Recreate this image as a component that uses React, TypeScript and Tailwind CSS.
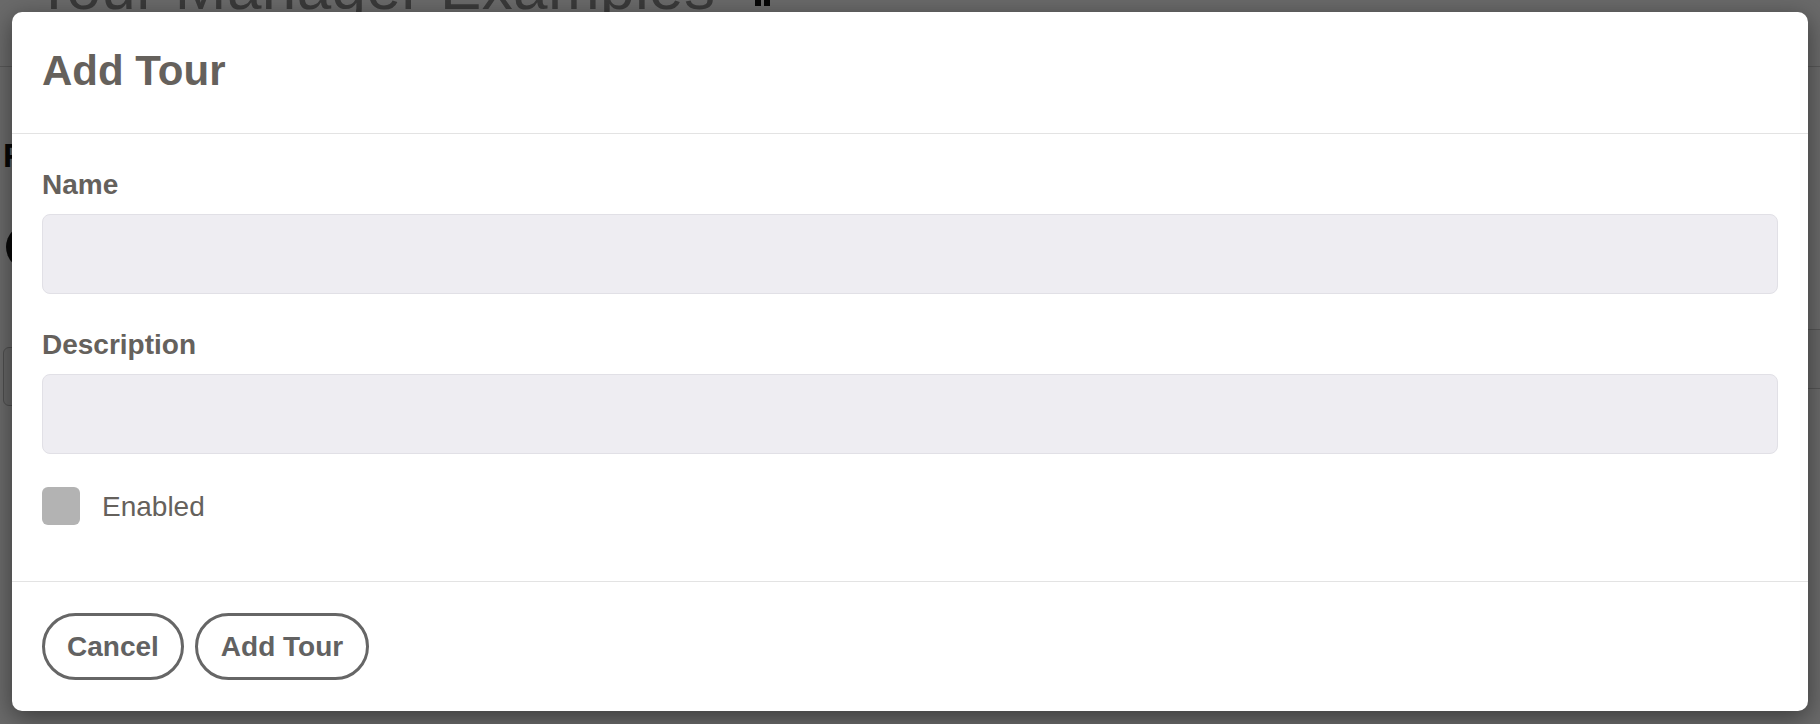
const font = "font-['Liberation_Sans','Helvetica_Neue',Arial,sans-serif]";

function BackgroundPage() {
  return (
    <div className="flex h-full flex-col bg-white text-[#111]">
      {/* page header, mostly hidden behind the dialog */}
      <div className="flex h-[67px] items-start border-b border-[#d4d4d4] pl-[35px]">
        <h1 className="mt-[-43px] text-[62px] font-normal leading-none tracking-[0.4px] text-[#8c8c8c]">Tour Manager Examples</h1>
        <span className="ml-[40px] mt-0 flex h-[6px] gap-[3px]">
          <span className="w-[6px] bg-[#111]" />
          <span className="w-[6px] bg-[#111]" />
        </span>
      </div>

      <div className="flex flex-1">
        <div className="flex w-[60px] flex-col pl-[3px]">
          <p className="mt-[72px] text-[33px] font-bold leading-none">F</p>
          <div className="ml-[3px] mt-[52px] h-[46px] w-[46px] rounded-full bg-[#1a1a1a]" />
          <div className="mt-[77px] h-[59px] w-[40px] rounded-[6px] border border-[#bbb] bg-[#f2f2f2]" />
        </div>
        <div className="flex-1" />
        <div className="flex w-[60px] flex-col">
          <p className="mt-[154px] pl-[2px] text-[26px] leading-none text-[#222]">Di</p>
          <div className="mt-[82px] h-[60px] border-y border-[#ccc] bg-[#f7f7f7]" />
          <p className="mt-[56px] pl-[2px] text-[24px] font-bold leading-none">b</p>
        </div>
      </div>
    </div>
  );
}

function Field({ label }: { label: string }) {
  return (
    <div className="flex flex-col">
      <label className="text-[28px] font-bold leading-[32px] text-[#65615c]">{label}</label>
      <input
        type="text"
        className="mt-[13px] h-[80px] w-full rounded-[8px] border border-[#e1e0e6] bg-[#eeedf2] px-4 text-[27px] outline-none"
      />
    </div>
  );
}

export default function App() {
  return (
    <div className={`relative h-[724px] w-full overflow-hidden ${font}`}>
      <BackgroundPage />

      {/* overlay */}
      <div className="absolute inset-0 bg-[rgba(0,0,0,0.585)]" />

      {/* dialog */}
      <div className="absolute left-[12px] top-[12px] flex w-[1796px] flex-col rounded-[10px] bg-white shadow-[0_6px_24px_rgba(0,0,0,0.45)]">
        <div className="h-[121px] px-[30px] pt-[35px]">
          <h2 className="text-[42px] font-bold leading-[48px] text-[#65615c]">Add Tour</h2>
        </div>

        <div className="border-t border-[#e3e3e3] px-[30px] pb-[56px] pt-[35px]">
          <Field label="Name" />
          <div className="mt-[35px]">
            <Field label="Description" />
          </div>
          <div className="mt-[33px] flex items-center">
            <span className="h-[38px] w-[38px] rounded-[6px] bg-[#b3b3b3]" />
            <span className="ml-[22px] mt-[2px] text-[28px] leading-[32px] text-[#65615c]">Enabled</span>
          </div>
        </div>

        <div className="flex gap-[11px] border-t border-[#e3e3e3] px-[30px] pb-[31px] pt-[31px]">
          <button className="h-[67px] rounded-full border-[3px] border-[#666] px-[22px] text-[28px] font-bold text-[#626262]">
            Cancel
          </button>
          <button className="h-[67px] rounded-full border-[3px] border-[#666] px-[23px] text-[28px] font-bold text-[#626262]">
            Add Tour
          </button>
        </div>
      </div>
    </div>
  );
}
